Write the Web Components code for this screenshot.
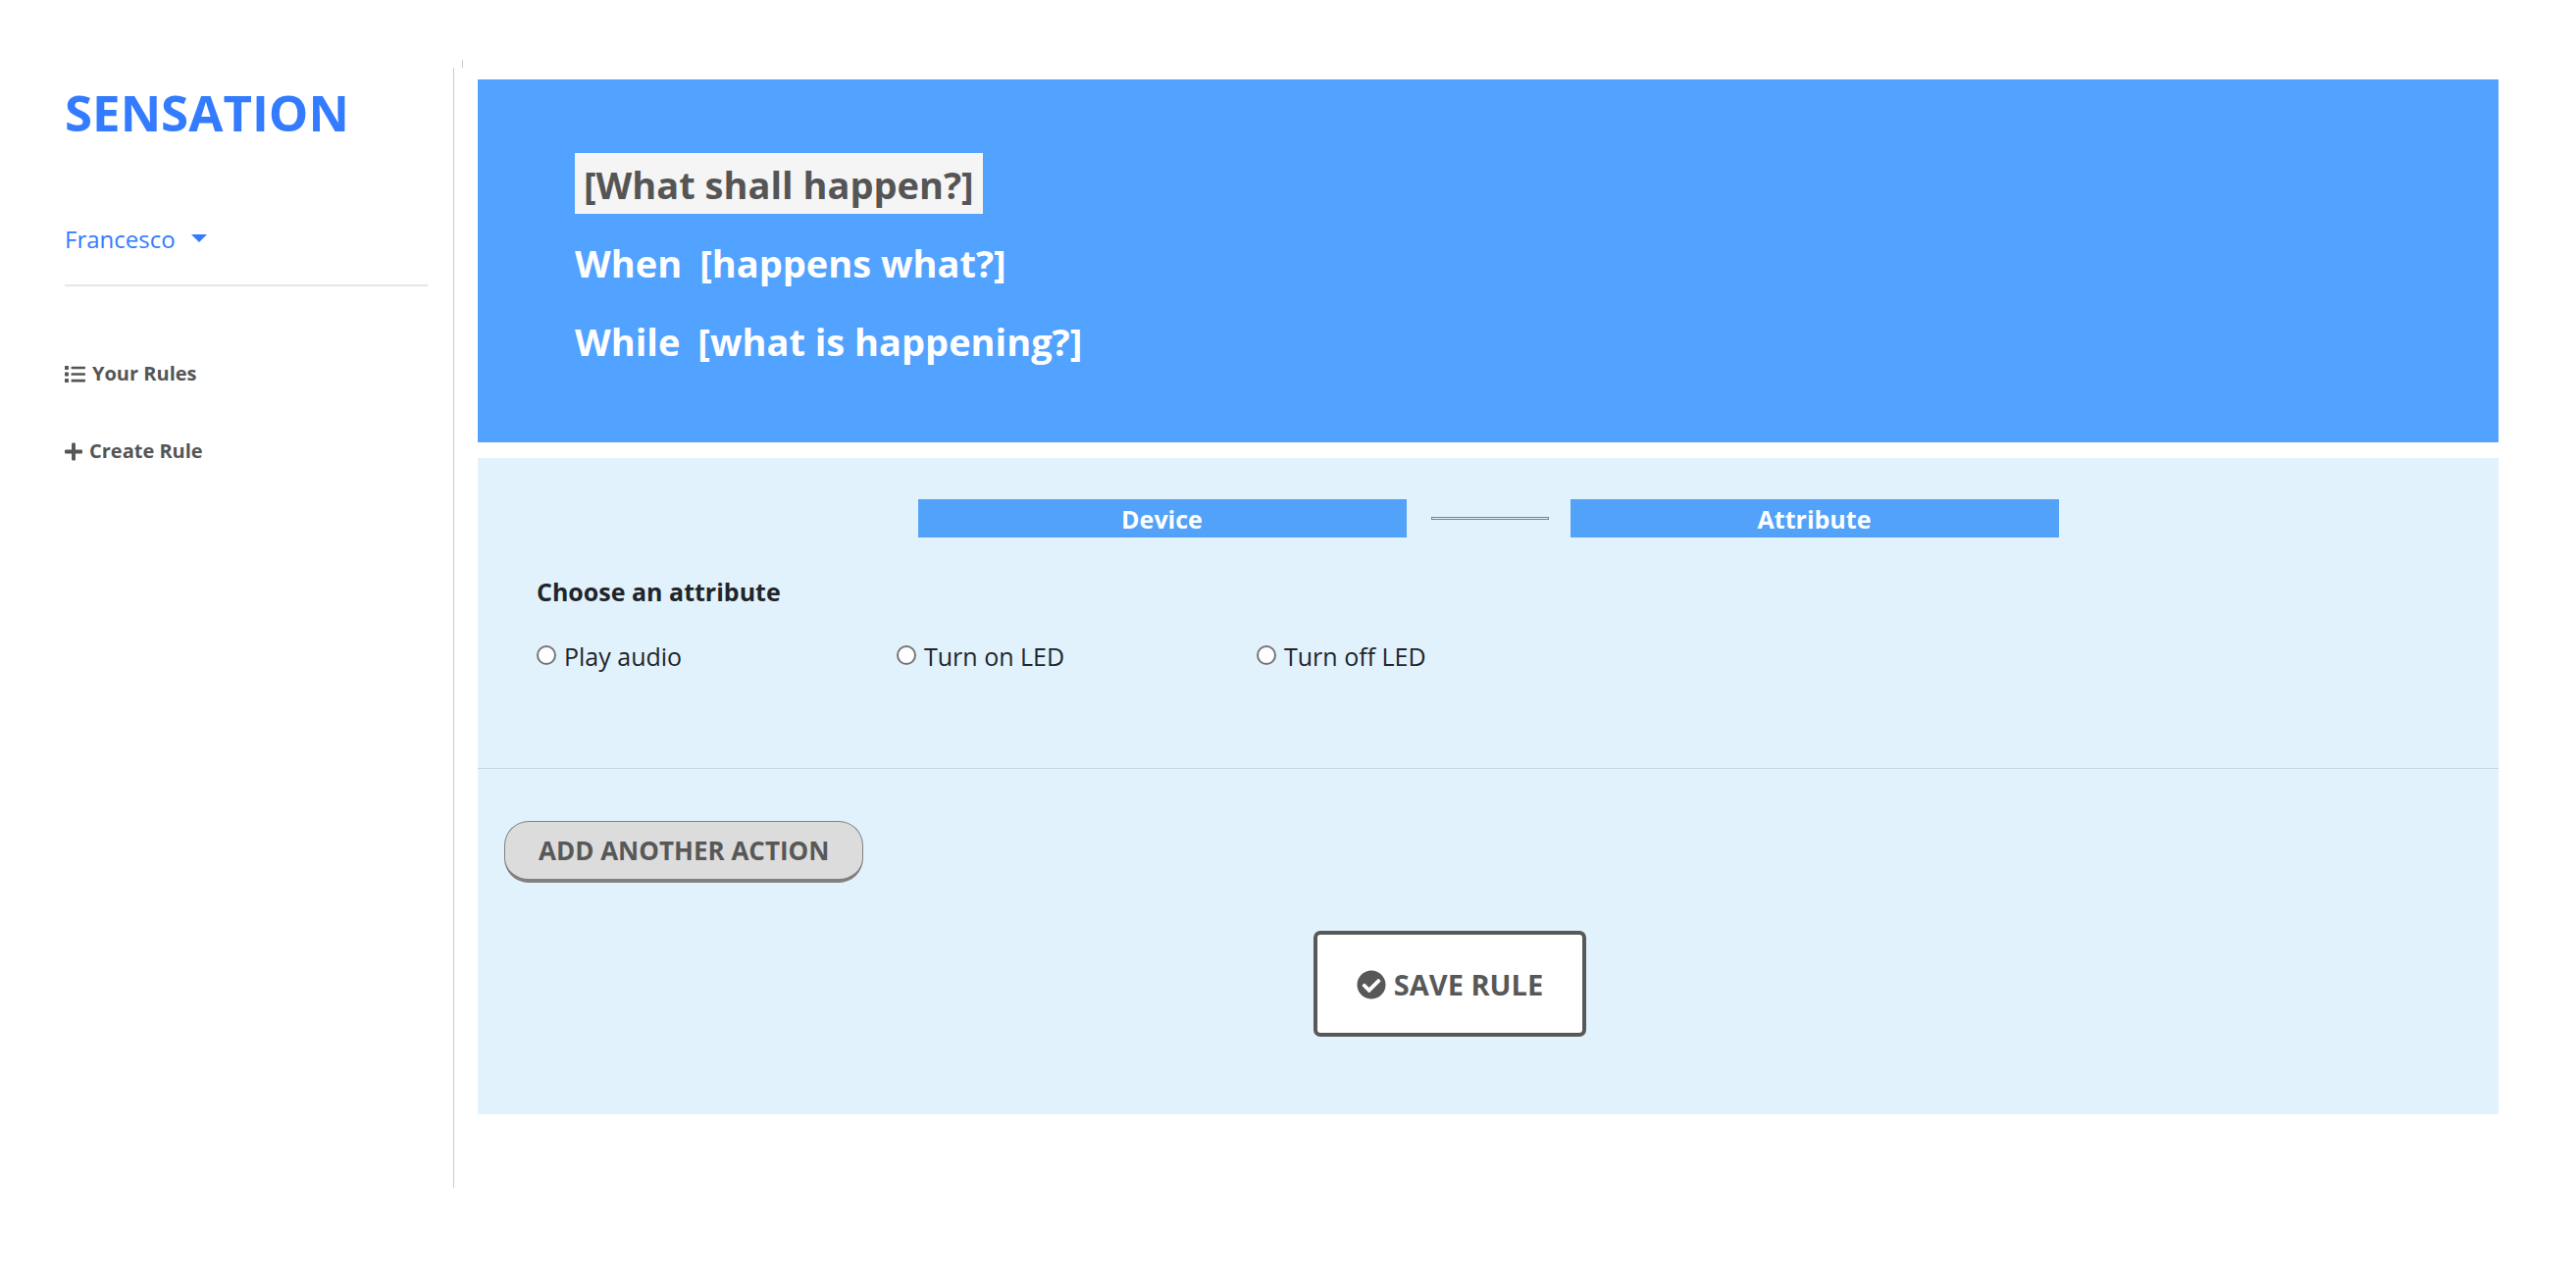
<!DOCTYPE html>
<html lang="en">
<head>
<meta charset="utf-8">
<title>Sensation</title>
<style>
  body { margin: 0; background: #fff; color: #212529; font-family: "Open Sans", "Noto Sans", sans-serif; }
</style>
</head>
<body>
<sensation-app></sensation-app>

<template id="app-template">
  <style>
    :host { display: block; padding-top: 61px; }
    .topbar { margin-left: 471px; height: 8px; border-left: 1px solid #ccc; }
    .columns { display: flex; align-items: stretch; }
    side-bar { flex: 0 0 auto; }
    main { flex: 1; min-width: 0; display: flex; flex-direction: column; gap: 16px; padding: 12px 79px 75px 24px; }
  </style>
  <div class="topbar"></div>
  <div class="columns">
    <side-bar></side-bar>
    <main>
      <rule-summary>
        <rule-line active>[What shall happen?]</rule-line>
        <rule-line word="When">[happens what?]</rule-line>
        <rule-line word="While">[what is happening?]</rule-line>
      </rule-summary>
      <action-panel></action-panel>
    </main>
  </div>
</template>

<template id="side-template">
  <style>
    :host { display: block; box-sizing: border-box; width: 463px; padding: 15px 26px 0 66px; border-right: 1px solid #ccc; }
    h1 { margin: 0 0 82px; font-size: 51px; line-height: 60px; font-weight: 700; color: #337bff; }
    .user { display: flex; align-items: center; gap: 16px; padding: 0; border: 0; background: none; font: inherit; font-size: 24px; line-height: 36px; color: #337bff; }
    .caret { margin-bottom: 2px; border: 8px solid transparent; border-top-color: #337bff; border-bottom: 0; }
    hr { margin: 28px 0 75px; border: 0; height: 2px; background: #e6e6e6; }
    nav { display: flex; flex-direction: column; align-items: flex-start; gap: 51px; }
  </style>
  <h1>SENSATION</h1>
  <button class="user" type="button" aria-haspopup="menu">Francesco<span class="caret"></span></button>
  <hr>
  <nav>
    <nav-link icon="list">Your Rules</nav-link>
    <nav-link icon="plus">Create Rule</nav-link>
  </nav>
</template>

<template id="nav-template">
  <style>
    :host { display: block; }
    a { display: flex; align-items: center; gap: 7px; font-size: 20px; line-height: 28px; font-weight: 700; color: #555; text-decoration: none; }
  </style>
  <a href="#"><fa-icon></fa-icon><slot></slot></a>
</template>

<template id="summary-template">
  <style>
    :host { display: flex; flex-direction: column; align-items: flex-start; gap: 18px; padding: 75px 99px 73px; background: #52a2ff; }
  </style>
  <slot></slot>
</template>

<template id="line-template">
  <style>
    :host { display: flex; gap: 18px; padding-top: 2px; font-size: 38px; line-height: 60px; font-weight: 700; color: #fff; }
    :host([active]) { padding: 2px 9px 0; background: #f5f5f5; color: #555; }
    .word:empty { display: none; }
  </style>
  <span class="word"></span><span><slot></slot></span>
</template>

<template id="panel-template">
  <style>
    :host { display: block; padding: 42px 0 79px; background: #e1f2fd; }
    .steps { display: flex; justify-content: center; align-items: center; }
    .connector { flex: 0 0 auto; box-sizing: border-box; width: 120px; height: 3px; margin: 0 22px 0 25px; border: 1px solid #808080; }
    fieldset { min-width: 0; margin: 37px 60px 96px; padding: 0; border: 0; }
    legend { padding: 0; margin-bottom: 30px; font-size: 25px; line-height: 36px; font-weight: 700; }
    .options { display: grid; grid-template-columns: repeat(auto-fill, 367px); }
    hr { margin: 0; border: 0; height: 1px; background: #c6d6df; }
    .add { padding: 53px 27px 49px; }
    .add button { display: block; padding: 0 34px; border: 1px solid #808080; border-bottom-width: 4px; border-radius: 25px; background: #dcdcdc; color: #585858; font: inherit; font-size: 26px; line-height: 58px; font-weight: 700; }
    .save { display: flex; justify-content: center; padding-right: 78px; }
    .save button { display: flex; align-items: center; gap: 8px; padding: 33px 40px 31px; border: 4px solid #585858; border-radius: 7px; background: #fff; color: #585858; font: inherit; font-size: 29px; line-height: 36px; font-weight: 700; }
  </style>
  <div class="steps">
    <step-tab>Device</step-tab>
    <div class="connector"></div>
    <step-tab>Attribute</step-tab>
  </div>
  <fieldset>
    <legend>Choose an attribute</legend>
    <div class="options">
      <label-radio><input type="radio" name="attribute" id="play"><label for="play">Play audio</label></label-radio>
      <label-radio><input type="radio" name="attribute" id="on"><label for="on">Turn on LED</label></label-radio>
      <label-radio><input type="radio" name="attribute" id="off"><label for="off">Turn off LED</label></label-radio>
    </div>
  </fieldset>
  <hr>
  <div class="add"><button type="button">ADD ANOTHER ACTION</button></div>
  <div class="save"><button type="button"><fa-icon name="check"></fa-icon>SAVE RULE</button></div>
</template>

<template id="tab-template">
  <style>
    :host { display: block; flex: 0 1 498px; padding-top: 1px; background: #52a2fa; color: #fff; text-align: center; font-size: 25px; line-height: 38px; font-weight: 700; }
  </style>
  <slot></slot>
</template>

<template id="radio-template">
  <style>
    :host { display: flex; align-items: center; gap: 8px; font-size: 25px; line-height: 36px; }
    ::slotted(input) { appearance: none; box-sizing: border-box; width: 20px; height: 20px; margin: 0 0 2px; border: 2px solid #767676; border-radius: 50%; background: #fff; }
    ::slotted(input:checked) { border-color: #0075ff; background: radial-gradient(#0075ff 5px, #fff 6px); }
  </style>
  <slot></slot>
</template>

<script>
  const ICONS = {
    list: [21, 21, '0 0 512 512', 'M80 368H16a16 16 0 0 0-16 16v64a16 16 0 0 0 16 16h64a16 16 0 0 0 16-16v-64a16 16 0 0 0-16-16zm0-320H16A16 16 0 0 0 0 64v64a16 16 0 0 0 16 16h64a16 16 0 0 0 16-16V64a16 16 0 0 0-16-16zm0 160H16a16 16 0 0 0-16 16v64a16 16 0 0 0 16 16h64a16 16 0 0 0 16-16v-64a16 16 0 0 0-16-16zm416 176H176a16 16 0 0 0-16 16v32a16 16 0 0 0 16 16h320a16 16 0 0 0 16-16v-32a16 16 0 0 0-16-16zm0-320H176a16 16 0 0 0-16 16v32a16 16 0 0 0 16 16h320a16 16 0 0 0 16-16V80a16 16 0 0 0-16-16zm0 160H176a16 16 0 0 0-16 16v32a16 16 0 0 0 16 16h320a16 16 0 0 0 16-16v-32a16 16 0 0 0-16-16z'],
    plus: [18, 21, '0 0 448 512', 'M416 208H272V64c0-17.67-14.33-32-32-32h-32c-17.67 0-32 14.33-32 32v144H32c-17.67 0-32 14.33-32 32v32c0 17.67 14.33 32 32 32h144v144c0 17.67 14.33 32 32 32h32c17.67 0 32-14.33 32-32V304h144c17.67 0 32-14.33 32-32v-32c0-17.67-14.33-32-32-32z'],
    check: [30, 30, '0 0 512 512', 'M504 256c0 136.967-111.033 248-248 248S8 392.967 8 256 119.033 8 256 8s248 111.033 248 248zM227.314 387.314l184-184c6.248-6.248 6.248-16.379 0-22.627l-22.627-22.627c-6.248-6.249-16.379-6.249-22.628 0L216 308.118l-70.059-70.059c-6.248-6.248-16.379-6.248-22.628 0l-22.627 22.627c-6.248 6.248-6.248 16.379 0 22.627l104 104c6.249 6.249 16.379 6.249 22.628.001z']
  };

  class TemplateElement extends HTMLElement {
    constructor() {
      super();
      const template = document.getElementById(this.constructor.template);
      this.attachShadow({ mode: 'open' }).append(document.importNode(template.content, true));
    }
  }

  customElements.define('fa-icon', class extends HTMLElement {
    static observedAttributes = ['name'];
    constructor() {
      super();
      this.attachShadow({ mode: 'open' });
    }
    attributeChangedCallback(attribute, previous, name) {
      const [width, height, box, path] = ICONS[name];
      this.shadowRoot.innerHTML =
        `<style>:host { display: block; flex: none; } svg { display: block; fill: currentColor; }</style>
         <svg width="${width}" height="${height}" viewBox="${box}" aria-hidden="true"><path d="${path}"/></svg>`;
    }
  });

  customElements.define('nav-link', class extends TemplateElement {
    static template = 'nav-template';
    connectedCallback() {
      this.shadowRoot.querySelector('fa-icon').setAttribute('name', this.getAttribute('icon'));
    }
  });

  customElements.define('rule-line', class extends TemplateElement {
    static template = 'line-template';
    connectedCallback() {
      this.shadowRoot.querySelector('.word').textContent = this.getAttribute('word') || '';
    }
  });

  customElements.define('step-tab', class extends TemplateElement { static template = 'tab-template'; });
  customElements.define('label-radio', class extends TemplateElement { static template = 'radio-template'; });
  customElements.define('rule-summary', class extends TemplateElement { static template = 'summary-template'; });
  customElements.define('action-panel', class extends TemplateElement { static template = 'panel-template'; });
  customElements.define('side-bar', class extends TemplateElement { static template = 'side-template'; });
  customElements.define('sensation-app', class extends TemplateElement { static template = 'app-template'; });
</script>
</body>
</html>
